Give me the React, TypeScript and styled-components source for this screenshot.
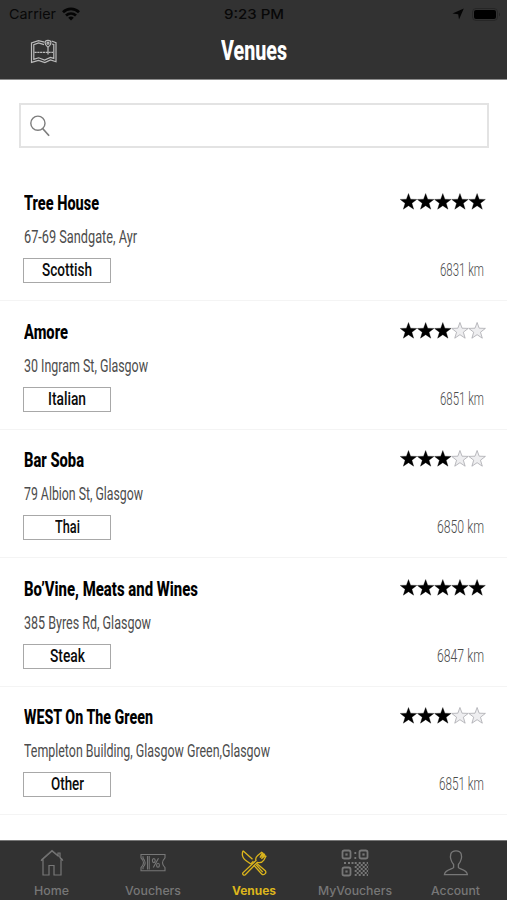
import React, { useLayoutEffect, useRef, useState } from 'react';
import styled, { createGlobalStyle } from 'styled-components';

const GlobalStyle = createGlobalStyle`
  * { box-sizing: border-box; }
  html, body { margin: 0; padding: 0; }
  body { background: #fff; font-family: Roboto, "Liberation Sans", sans-serif; }
`;

const Screen = styled.div`
  width: 507px;
  height: 900px;
  display: flex;
  flex-direction: column;
  background: #fff;
  overflow: hidden;
`;

const FitBox = styled.span<{ $width: number }>`
  display: block;
  flex: none;
  width: ${(p) => p.$width}px;
  white-space: nowrap;
`;

const FitText = styled.span`
  display: inline-block;
  transform-origin: 0 50%;
`;

/* Condenses its text horizontally to the given width. */
function Fit({ width, children }: { width: number; children: React.ReactNode }) {
  const ref = useRef<HTMLSpanElement>(null);
  const [scale, setScale] = useState(1);
  useLayoutEffect(() => {
    const natural = parseFloat(getComputedStyle(ref.current!).width);
    if (natural) setScale(width / natural);
  }, [width, children]);
  return (
    <FitBox $width={width}>
      <FitText ref={ref} style={{ transform: `scaleX(${scale})` }}>{children}</FitText>
    </FitBox>
  );
}

const Header = styled.header`
  height: 80px;
  flex: none;
  background: #323232;
  border-bottom: 1px solid #8c8c8c;
`;

const StatusBar = styled.div`
  height: 27px;
  display: grid;
  grid-template-columns: 1fr auto 1fr;
  align-items: center;
  padding: 1px 6px 0 9px;
  color: #080808;
  font: 400 13.5px/26px Inter, sans-serif;
`;

const StatusGroup = styled.div<{ $end?: boolean }>`
  display: flex;
  align-items: center;
  justify-content: ${(p) => (p.$end ? 'flex-end' : 'flex-start')};
  gap: ${(p) => (p.$end ? 8 : 6)}px;
`;

const Clock = styled.div`
  font-weight: 500;
  margin-left: -3px;
`;

const TitleBar = styled.div`
  height: 50px;
  display: grid;
  grid-template-columns: 1fr auto 1fr;
  align-items: center;
  padding: 0 30px;
`;

const Title = styled.h1`
  margin: -3px 0 0;
  color: #fff;
  font-size: 28px;
  line-height: 34px;
  font-weight: 800;
`;

const SearchField = styled.label`
  margin: 23px 18px 24.5px 19px;
  height: 45px;
  flex: none;
  display: flex;
  align-items: center;
  padding: 0 9px;
  border: 2px solid #e3e3e3;
`;

const SearchInput = styled.input`
  flex: 1;
  border: 0;
  outline: 0;
  background: transparent;
`;

const List = styled.main`
  flex: 1;
  min-height: 0;
`;

const Row = styled.article`
  height: 128.6px;
  padding: 18.5px 21px 0 23px;
  border-bottom: 1px solid #f4f4f4;
`;

const Line = styled.div<{ $height: number; $gap?: number }>`
  display: flex;
  align-items: center;
  justify-content: space-between;
  height: ${(p) => p.$height}px;
  margin-top: ${(p) => p.$gap ?? 0}px;
`;

const Name = styled.h2`
  margin: 0 0 0 1px;
  color: #000;
  font-size: 21px;
  line-height: 24px;
  font-weight: 800;
`;

const Address = styled.div`
  margin-left: 1px;
  color: #4c4c4c;
  font-size: 18.5px;
  line-height: 24px;
`;

const Tag = styled.div`
  width: 88px;
  height: 25px;
  display: flex;
  align-items: center;
  justify-content: center;
  border: 1px solid #a8a8a8;
  color: #0c0c0c;
  font-size: 18.5px;
  line-height: 23px;
  font-weight: 500;
`;

const Distance = styled.div`
  margin: -1px 2px 0 0;
  color: #4c4c4c;
  font-size: 17.5px;
  line-height: 22px;
  font-weight: 350;
`;

const TabBar = styled.nav`
  height: 60px;
  flex: none;
  display: grid;
  grid-template-columns: repeat(5, 101px);
  justify-content: center;
  background: #323232;
  border-top: 1px solid #777;
`;

const Tab = styled.a<{ $active?: boolean }>`
  display: flex;
  flex-direction: column;
  align-items: center;
  padding-top: 7px;
  color: ${(p) => (p.$active ? '#dcb51c' : '#777')};
  font: ${(p) => (p.$active ? 700 : 500)} 12px/18px Inter, sans-serif;
  svg { margin-bottom: 5px; margin-top: 1px; }
`;

const StarRow = styled.svg`
  margin-top: -3px;
`;

const Stars = ({ rating }: { rating: number }) => (
  <StarRow width="86" height="17" viewBox="0 0 86 17">
    {[0, 1, 2, 3, 4].map((i) => (
      <path
        key={i}
        transform={`translate(${i * 17.15} 0)`}
        d="M8.5 .5l2.1 5.7 6.2.2-4.9 3.8 1.8 6-5.2-3.5-5.2 3.5 1.8-6L.2 6.4l6.2-.2z"
        fill={i < rating ? '#000' : '#eeeef0'}
        stroke={i < rating ? '#000' : '#a9a9af'}
        strokeWidth={i < rating ? 0.3 : 0.8}
      />
    ))}
  </StarRow>
);

const WifiIcon = () => (
  <svg width="18" height="14" viewBox="0 0 18 14" fill="none" stroke="#050505" strokeWidth="2.7">
    <path d="M1 5.2C5.5.7 12.5.7 17 5.2M4 8.6c3-2.8 7-2.8 10 0" />
    <path d="M9 13.4L6.2 10.7q2.8-2.2 5.6 0z" fill="#050505" stroke="none" />
  </svg>
);

const LocationIcon = () => (
  <svg width="12" height="12" viewBox="0 0 12 12"><path d="M11.8.5L7 11.5 6.2 6.2.5 5.4z" fill="#050505" /></svg>
);

const BatteryIcon = () => (
  <svg width="29" height="13" viewBox="0 0 29 13">
    <rect x=".5" y=".5" width="25" height="12" rx="3.5" fill="none" stroke="#262626" />
    <rect x="2" y="2" width="22" height="9" rx="2" fill="#000" />
    <path d="M27 4.5q2 2 0 4z" fill="#222" />
  </svg>
);

const MapIcon = () => (
  <svg width="28" height="26" viewBox="0 0 28 26" fill="none" stroke="#bcbcbc" strokeWidth="1.2">
    <path d="M14.4 3.2L8.5 1.7 1.5 4v19.4l7-2 6.4 2.2 5.6-2.6 5.5 1.7V3.6L21.6 2" />
    <path d="M14 5.6L8.6 4 3.8 5.6v14.8l4.8-1.6 6 2.2 5.8-2.6 3.4 1V5.4l-2-.4" />
    <path d="M4.5 13.3H23" strokeDasharray="2.2 .6" />
    <path d="M18 15.5V8.2C14.2 5.6 14 1.3 18 1.3s3.8 4.3 0 6.9" />
    <circle cx="18" cy="4.2" r="1" />
  </svg>
);

const SearchIcon = () => (
  <svg width="20" height="22" viewBox="0 0 20 22" fill="none" stroke="#7d7d7d" strokeWidth="1.4">
    <circle cx="7.9" cy="8.2" r="7.1" />
    <path d="M12.4 13.3l6.7 7.5" strokeWidth="1.7" />
  </svg>
);

const HomeIcon = () => (
  <svg width="28" height="28" viewBox="0 0 28 28" fill="none" stroke="currentColor" strokeWidth="1.2">
    <path d="M3 11.8L14 2l6 5V4h2v4.7l3 3M5 10.5V26h6V16.5h5V26h7V10.5" />
    <path d="M3 10.8L14 1l11 9.7" strokeWidth=".7" />
  </svg>
);

const VoucherIcon = () => (
  <svg width="28" height="28" viewBox="0 0 28 28" fill="none" stroke="currentColor" strokeWidth="1.1">
    <path d="M2 5.5h24v3.3q-5 5.2 0 9.8v3.2H2v-3.2q5-4.6 0-9.8zM4 7.2v2q4.3 5 0 9.2v1.8M8.5 7v13.5M10.2 7v13.5" />
    <path d="M14.3 18.5l5.2-9.2" />
    <ellipse cx="14.8" cy="11.6" rx="1.4" ry="2" />
    <ellipse cx="19" cy="16.3" rx="1.4" ry="2" />
  </svg>
);

const CutleryIcon = () => (
  <svg width="28" height="28" viewBox="0 0 28 28" fill="none" stroke="currentColor" strokeWidth="1.3">
    <path d="M3 1.7c-1.5 4.2.2 8 3.2 10l4.6 3.4M3 1.7l9.5 8.5M16.5 14.2l8.8 7.5c1.7 2.2-1.5 5.2-3.6 3.3l-7.9-8.8" />
    <path d="M17.3 13.4c3 .7 5.3-.4 6.5-2.3l2.1-3.8-1-.6-3.5 3 3.1-4.3-.8-.6-3.8 3.7 2.7-4.6-1-.7-3.9 3.2c-2 1.6-2.4 3-1.7 5.2L2.9 23.8c-.8 1.5.9 3 2.4 1.9z" />
    <path d="M10.6 15.1l2.8-2.8M16.2 15.7l6.5 7.4" />
  </svg>
);

const QrIcon = () => (
  <svg width="28" height="28" viewBox="0 0 28 28" fill="none" stroke="currentColor" strokeWidth="1.8">
    {[[1.5, 1.5], [18.5, 1.5], [1.5, 18.5]].map(([x, y]) => (
      <g key={`${x}-${y}`}>
        <rect x={x} y={y} width="8" height="8" rx="1.8" />
        <rect x={x + 2.9} y={y + 2.9} width="2.2" height="2.2" fill="currentColor" stroke="none" />
      </g>
    ))}
    <path d="M14.3 3v2M14.3 8v2M3 14h2M7 14h2M10.5 14h2" />
    {[0, 1, 2, 3, 4, 5, 6].map((r) => (
      <path key={r} d={`M${r % 2 ? 15.7 : 13.7} ${14 + r * 2}h13.3`} strokeDasharray="2 2" />
    ))}
  </svg>
);

const AccountIcon = () => (
  <svg width="28" height="28" viewBox="0 0 28 28" fill="none" stroke="currentColor" strokeWidth="1.3">
    <path d="M11.6 18.5v-3C8.8 12 8 8 8.8 5 10 .8 18 .8 19.2 5c.8 3 0 7-2.8 10.5v3c1 2 8.5 1.7 9 7.2h-23c.5-5.5 8-5.2 9.2-7.2z" />
  </svg>
);

const venues = [
  { name: 'Tree House', nameWidth: 75, address: '67-69 Sandgate, Ayr', addressWidth: 113, tag: 'Scottish', tagWidth: 50, distance: '6831 km', distanceWidth: 44, rating: 5 },
  { name: 'Amore', nameWidth: 44, address: '30 Ingram St, Glasgow', addressWidth: 124, tag: 'Italian', tagWidth: 38, distance: '6851 km', distanceWidth: 44, rating: 3 },
  { name: 'Bar Soba', nameWidth: 60, address: '79 Albion St, Glasgow', addressWidth: 119, tag: 'Thai', tagWidth: 25, distance: '6850 km', distanceWidth: 47, rating: 3 },
  { name: 'Bo’Vine, Meats and Wines', nameWidth: 174, address: '385 Byres Rd, Glasgow', addressWidth: 127, tag: 'Steak', tagWidth: 35, distance: '6847 km', distanceWidth: 47, rating: 5 },
  { name: 'WEST On The Green', nameWidth: 129, address: 'Templeton Building, Glasgow Green,Glasgow', addressWidth: 246, tag: 'Other', tagWidth: 33, distance: '6851 km', distanceWidth: 45, rating: 3 },
];

const tabs = [
  { label: 'Home', width: 35, Icon: HomeIcon },
  { label: 'Vouchers', width: 56, Icon: VoucherIcon },
  { label: 'Venues', width: 44, Icon: CutleryIcon, active: true },
  { label: 'MyVouchers', width: 74, Icon: QrIcon },
  { label: 'Account', width: 49, Icon: AccountIcon },
];

export default function App() {
  return (
    <Screen>
      <GlobalStyle />
      <Header>
        <StatusBar>
          <StatusGroup><Fit width={47}>Carrier</Fit><WifiIcon /></StatusGroup>
          <Clock><Fit width={60}>9:23 PM</Fit></Clock>
          <StatusGroup $end><LocationIcon /><BatteryIcon /></StatusGroup>
        </StatusBar>
        <TitleBar>
          <MapIcon />
          <Title><Fit width={66}>Venues</Fit></Title>
        </TitleBar>
      </Header>
      <SearchField><SearchIcon /><SearchInput aria-label="Search venues" /></SearchField>
      <List>
        {venues.map((v) => (
          <Row key={v.name}>
            <Line $height={24}>
              <Name><Fit width={v.nameWidth}>{v.name}</Fit></Name>
              <Stars rating={v.rating} />
            </Line>
            <Line $height={24} $gap={10}>
              <Address><Fit width={v.addressWidth}>{v.address}</Fit></Address>
            </Line>
            <Line $height={25} $gap={9}>
              <Tag><Fit width={v.tagWidth}>{v.tag}</Fit></Tag>
              <Distance><Fit width={v.distanceWidth}>{v.distance}</Fit></Distance>
            </Line>
          </Row>
        ))}
      </List>
      <TabBar>
        {tabs.map(({ label, width, Icon, active }) => (
          <Tab key={label} $active={active}><Icon /><Fit width={width}>{label}</Fit></Tab>
        ))}
      </TabBar>
    </Screen>
  );
}
